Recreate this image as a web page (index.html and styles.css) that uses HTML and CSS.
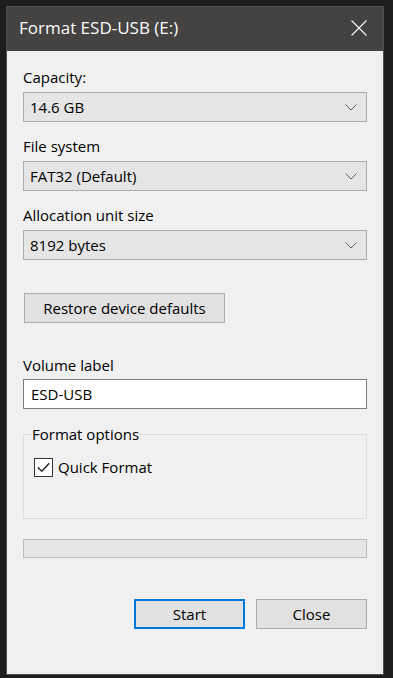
FILE: index.html
```html
<!DOCTYPE html>
<html>
<head>
<meta charset="utf-8">
<link rel="stylesheet" href="styles.css">
</head>
<body>
<div class="dialog">
  <div class="titlebar">
    <span class="title">Format ESD-USB (E:)</span>
    <svg class="close" width="16" height="16" viewBox="0 0 16 16"><path d="M0.5 0.5 L15.5 15.5 M15.5 0.5 L0.5 15.5" stroke="#f2f2f2" stroke-width="1.2" fill="none"/></svg>
  </div>
  <div class="content">
    <div class="field">
      <div class="label">Capacity:</div>
      <div class="combo"><span>14.6 GB</span><svg width="12" height="7" viewBox="0 0 12 7"><path d="M0.5 0.5 L6 6 L11.5 0.5" stroke="#606060" stroke-width="1" fill="none"/></svg></div>
    </div>
    <div class="field">
      <div class="label">File system</div>
      <div class="combo"><span>FAT32 (Default)</span><svg width="12" height="7" viewBox="0 0 12 7"><path d="M0.5 0.5 L6 6 L11.5 0.5" stroke="#606060" stroke-width="1" fill="none"/></svg></div>
    </div>
    <div class="field">
      <div class="label">Allocation unit size</div>
      <div class="combo"><span>8192 bytes</span><svg width="12" height="7" viewBox="0 0 12 7"><path d="M0.5 0.5 L6 6 L11.5 0.5" stroke="#606060" stroke-width="1" fill="none"/></svg></div>
    </div>
    <div class="btn restore">Restore device defaults</div>
    <div class="field volume">
      <div class="label">Volume label</div>
      <div class="textbox">ESD-USB</div>
    </div>
    <fieldset class="options">
      <legend>Format options</legend>
      <div class="check-row">
        <span class="checkbox"><svg width="17" height="17" viewBox="0 0 17 17"><path d="M3 8.5 L6.8 12.3 L14.2 4.2" stroke="#202020" stroke-width="1.4" fill="none"/></svg></span>
        <span class="check-label">Quick Format</span>
      </div>
    </fieldset>
    <div class="progress"></div>
    <div class="buttons">
      <div class="btn action primary">Start</div>
      <div class="btn action">Close</div>
    </div>
  </div>
</div>
</body>
</html>
```
FILE: styles.css
```css
html, body {
  margin: 0;
  padding: 0;
  background: #1e1e1e;
}
body {
  padding: 6px 9px 3px 6px;
  font-family: "Open Sans", "Noto Sans", sans-serif;
  font-size: 15px;
  color: #000;
}
.dialog {
  width: 376px;
  height: 667px;
  border: 1px solid #4f4f4f;
  background: #f0f0f0;
  display: flex;
  flex-direction: column;
}
.titlebar {
  height: 44px;
  background: #454341;
  display: flex;
  align-items: center;
  justify-content: space-between;
  padding: 0 16px 0 12px;
  flex-shrink: 0;
}
.title {
  color: #fafafa;
  font-size: 17px;
  line-height: 20px;
  margin-top: -2px;
}
.close { display: block; margin-top: -2px; }
.content {
  padding: 16px 16px 0 16px;
  display: flex;
  flex-direction: column;
}
.field {
  display: flex;
  flex-direction: column;
  gap: 5px;
  margin-bottom: 14px;
}
.label {
  line-height: 20px;
  height: 20px;
}
.combo {
  height: 28px;
  border: 1px solid #adadad;
  background: #e5e5e5;
  display: flex;
  align-items: center;
  justify-content: space-between;
  padding: 0 9px 0 6px;
}
.combo svg { display: block; }
.btn {
  border: 1px solid #adadad;
  background: #e1e1e1;
  display: flex;
  align-items: center;
  justify-content: center;
  height: 28px;
}
.restore {
  width: 199px;
  margin: 19px 0 0 1px;
}
.volume { margin-top: 32px; margin-bottom: 0; gap: 4px; }
.textbox {
  height: 28px;
  border: 1px solid #7a7a7a;
  background: #fff;
  display: flex;
  align-items: center;
  padding: 0 7px;
}
.options {
  box-sizing: border-box;
  margin: 15px 0 0 0;
  padding: 0 8px;
  border: 1px solid #dcdcdc;
  height: 95px;
}
.options legend {
  padding: 0;
  line-height: 20px;
}
.check-row {
  display: flex;
  align-items: center;
  gap: 5px;
  margin-top: 13px;
  margin-left: 2px;
}
.checkbox {
  width: 17px;
  height: 17px;
  border: 1px solid #333;
  background: #fff;
  display: block;
}
.checkbox svg { display: block; }
.progress {
  margin-top: 20px;
  height: 17px;
  border: 1px solid #bcbcbc;
  background: #e6e6e6;
}
.buttons {
  display: flex;
  justify-content: flex-end;
  gap: 11px;
  margin-top: 41px;
}
.action {
  width: 109px;
}
.primary {
  border: 2px solid #0078d7;
  width: 107px;
  height: 26px;
}
```
